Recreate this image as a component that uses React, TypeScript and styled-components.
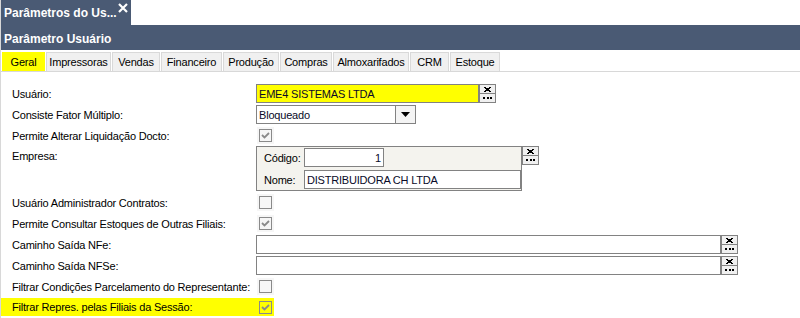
import React from 'react';
import styled, { createGlobalStyle } from 'styled-components';

const GlobalStyle = createGlobalStyle`
  html, body {
    margin: 0;
    padding: 0;
    background: #ffffff;
  }
  body {
    font-family: 'Liberation Sans', Arial, sans-serif;
    font-size: 11px;
    letter-spacing: -0.2px;
    color: #000;
  }
`;

const SLATE = '#4a5a74';

const Page = styled.div`
  width: 800px;
  height: 318px;
  overflow: hidden;
  display: flex;
  flex-direction: column;
  border-left: 1px solid #d8d8d8;
  box-sizing: border-box;

  & > * {
    flex-shrink: 0;
  }
`;

const TopBar = styled.div`
  display: flex;
  height: 25px;
`;

const DocTab = styled.div`
  width: 130px;
  background: ${SLATE};
  color: #fff;
  font-weight: bold;
  font-size: 12px;
  letter-spacing: 0;
  white-space: nowrap;
  display: flex;
  align-items: flex-start;
  justify-content: space-between;
  padding: 6px 2px 0 3px;
  box-sizing: border-box;
`;

const CloseX = styled.svg`
  margin-top: -3px;
  margin-right: 1px;
`;

const Header = styled.div`
  height: 25px;
  background: ${SLATE};
  color: #fff;
  font-weight: bold;
  font-size: 12px;
  letter-spacing: 0;
  display: flex;
  align-items: center;
  padding: 2px 0 0 3px;
  box-sizing: border-box;
`;

const TabStrip = styled.div`
  display: flex;
  padding: 2px 0 0 1px;
  height: 22px;
  box-sizing: border-box;
  border-bottom: 1px solid #d8d8d8;
`;

const Tab = styled.div<{ $active?: boolean; $w: number }>`
  width: ${(p) => p.$w}px;
  height: 19px;
  display: flex;
  align-items: center;
  justify-content: center;
  background: ${(p) => (p.$active ? '#ffff00' : '#f0f0f0')};
  border: 1px solid ${(p) => (p.$active ? '#ffff00' : '#d9d9d9')};
  border-bottom: none;
  margin-right: 1px;
  box-sizing: border-box;
  font-size: 11px;
  white-space: nowrap;
`;

const Form = styled.div`
  display: flex;
  flex-direction: column;
  padding-top: 12px;
`;

const Row = styled.div<{ $h?: number }>`
  display: flex;
  align-items: flex-start;
  height: ${(p) => p.$h ?? 21}px;
  flex-shrink: 0;
`;

const Highlight = styled.div`
  display: flex;
  align-items: flex-start;
  background: #ffff00;
  height: 18px;
`;

const Label = styled.div`
  width: 255px;
  padding: 3px 0 0 11px;
  box-sizing: border-box;
  line-height: 14px;
  white-space: nowrap;
`;

const HighlightLabel = styled(Label)`
  padding-top: 2px;
`;

const FieldWrap = styled.div`
  display: flex;
  align-items: flex-start;
`;

const Input = styled.div<{ $w: number; $bg?: string; $align?: string }>`
  width: ${(p) => p.$w}px;
  height: 19px;
  border: 1px solid #828282;
  background: ${(p) => p.$bg ?? '#fff'};
  box-sizing: border-box;
  padding: 0 2px;
  display: flex;
  align-items: center;
  justify-content: ${(p) => p.$align ?? 'flex-start'};
  color: #0a0a28;
  line-height: 14px;
  white-space: nowrap;
`;

const BtnStack = styled.div`
  display: flex;
  flex-direction: column;
  width: 17px;
  border: 1px solid #828282;
  box-sizing: border-box;
  background: #f0f0f0;
`;

const MiniBtn = styled.div<{ $top?: boolean }>`
  height: 8px;
  display: flex;
  align-items: center;
  justify-content: center;
  border-bottom: ${(p) => (p.$top ? '1px solid #828282' : 'none')};
`;

const SelectBtn = styled.div`
  width: 20px;
  height: 19px;
  border: 1px solid #828282;
  border-left: none;
  box-sizing: border-box;
  background: #f4f4f4;
  display: flex;
  align-items: center;
  justify-content: center;
`;

const CheckCell = styled.div<{ $bg?: string }>`
  width: 17px;
  height: 17px;
  background: ${(p) => p.$bg ?? '#f6f6f6'};
  display: flex;
  align-items: center;
  justify-content: center;
  margin: 1px 0 0 1px;
`;

const CheckBox = styled.div`
  width: 11px;
  height: 11px;
  border: 1px solid #8a8a8a;
  background: transparent;
  display: flex;
  align-items: center;
  justify-content: center;
`;

const Group = styled.div`
  width: 266px;
  height: 45px;
  border: 1px solid #828282;
  background: #f4f3ee;
  box-sizing: border-box;
  display: grid;
  grid-template-columns: 47px 1fr;
  grid-template-rows: 22px 21px;
  padding: 1px 1px 0 0;
`;

const GroupLabel = styled.div`
  padding: 3px 0 0 7px;
  line-height: 14px;
`;

const Buttons = () => (
  <BtnStack>
    <MiniBtn $top>
      <svg width="7" height="5" viewBox="0 0 7 5" shapeRendering="crispEdges">
        <path d="M0 0h2v1h3V0h2v1H6v1H5v1h1v1h1v1H5V4H2v1H0V4h1V3h1V2H1V1H0z" fill="#000" />
      </svg>
    </MiniBtn>
    <MiniBtn>
      <svg width="9" height="2" viewBox="0 0 9 2" shapeRendering="crispEdges">
        <rect x="0" y="0" width="2" height="2" fill="#000" />
        <rect x="3.5" y="0" width="2" height="2" fill="#000" />
        <rect x="7" y="0" width="2" height="2" fill="#000" />
      </svg>
    </MiniBtn>
  </BtnStack>
);

const Check = ({ checked, bg }: { checked?: boolean; bg?: string }) => (
  <CheckCell $bg={bg}>
    <CheckBox>
      {checked && (
        <svg width="9" height="9" viewBox="0 0 9 9">
          <path d="M1 4 L3.5 6.5 L8 2" fill="none" stroke="#8a8a8a" strokeWidth="1.8" />
        </svg>
      )}
    </CheckBox>
  </CheckCell>
);

const tabs: [string, number][] = [
  ['Geral', 43],
  ['Impressoras', 65],
  ['Vendas', 48],
  ['Financeiro', 61],
  ['Produção', 56],
  ['Compras', 52],
  ['Almoxarifados', 76],
  ['CRM', 39],
  ['Estoque', 50],
];

export default function App() {
  return (
    <>
      <GlobalStyle />
      <Page>
        <TopBar>
          <DocTab>
            <span>Parâmetros do Us...</span>
            <CloseX width="10" height="10" viewBox="0 0 10 10">
              <path d="M1 1 L9 9 M9 1 L1 9" stroke="#fff" strokeWidth="2.2" />
            </CloseX>
          </DocTab>
        </TopBar>
        <Header>Parâmetro Usuário</Header>
        <TabStrip>
          {tabs.map(([t, w], i) => (
            <Tab key={t} $w={w} $active={i === 0}>
              {t}
            </Tab>
          ))}
        </TabStrip>
        <Form>
          <Row>
            <Label>Usuário:</Label>
            <FieldWrap>
              <Input $w={223} $bg="#ffff00">EME4 SISTEMAS LTDA</Input>
              <Buttons />
            </FieldWrap>
          </Row>
          <Row>
            <Label>Consiste Fator Múltiplo:</Label>
            <FieldWrap>
              <Input $w={140}>Bloqueado</Input>
              <SelectBtn>
                <svg width="9" height="5" viewBox="0 0 9 5">
                  <path d="M0 0 H9 L4.5 5 Z" fill="#000" />
                </svg>
              </SelectBtn>
            </FieldWrap>
          </Row>
          <Row $h={20}>
            <Label>Permite Alterar Liquidação Docto:</Label>
            <Check checked />
          </Row>
          <Row $h={47}>
            <Label>Empresa:</Label>
            <FieldWrap>
              <Group>
                <GroupLabel>Código:</GroupLabel>
                <Input $w={80} $align="flex-end">1</Input>
                <GroupLabel>Nome:</GroupLabel>
                <Input $w={217}>DISTRIBUIDORA CH LTDA</Input>
              </Group>
              <Buttons />
            </FieldWrap>
          </Row>
          <Row>
            <Label>Usuário Administrador Contratos:</Label>
            <Check />
          </Row>
          <Row>
            <Label>Permite Consultar Estoques de Outras Filiais:</Label>
            <Check checked />
          </Row>
          <Row>
            <Label>Caminho Saída NFe:</Label>
            <FieldWrap>
              <Input $w={465} />
              <Buttons />
            </FieldWrap>
          </Row>
          <Row>
            <Label>Caminho Saída NFSe:</Label>
            <FieldWrap>
              <Input $w={465} />
              <Buttons />
            </FieldWrap>
          </Row>
          <Row>
            <Label>Filtrar Condições Parcelamento do Representante:</Label>
            <Check />
          </Row>
          <Row>
            <Highlight>
              <HighlightLabel>Filtrar Repres. pelas Filiais da Sessão:</HighlightLabel>
              <Check checked bg="#ffff00" />
            </Highlight>
          </Row>
        </Form>
      </Page>
    </>
  );
}
